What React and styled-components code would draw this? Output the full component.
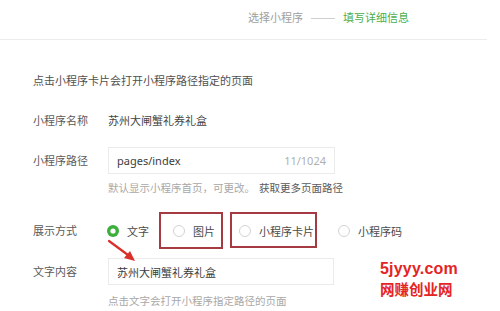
import React from 'react';
import styled, { createGlobalStyle } from 'styled-components';

const GlobalStyle = createGlobalStyle`
  html, body {
    margin: 0;
    padding: 0;
    background: #fff;
  }
  body {
    font-family: "Noto Sans", "Noto Sans CJK SC", sans-serif;
    color: #333;
  }
`;

const Page = styled.div`
  position: relative;
  width: 500px;
  height: 311px;
  overflow: hidden;
  background: #fff;
`;

const Header = styled.div`
  width: 487px;
  height: 40px;
  box-sizing: border-box;
  padding: 10px 0 0 248px;
  border-bottom: 1px solid #ececec;
  display: flex;
  align-items: flex-start;
  font-size: 11px;
  line-height: 16px;
`;

const Step = styled.span`
  color: ${p => (p.$active ? '#4cae4c' : '#a0a0a0')};
`;

const StepLine = styled.span`
  width: 24px;
  height: 1px;
  margin: 8px 8px 0;
  background: #cfcfcf;
`;

const Form = styled.div`
  padding-left: 33px;
  display: flex;
  flex-direction: column;
  font-size: 11px;
`;

const Intro = styled.div`
  margin-top: 31px;
  line-height: 20px;
  color: #505050;
`;

const Row = styled.div`
  margin-top: ${p => p.$mt}px;
  display: flex;
  align-items: center;
  min-height: 20px;
`;

const Label = styled.div`
  width: 75px;
  flex-shrink: 0;
  color: #5a5a5a;
  line-height: 20px;
`;

const Value = styled.div`
  color: #444;
  line-height: 20px;
`;

const Input = styled.div`
  width: ${p => p.$w}px;
  height: 27px;
  box-sizing: border-box;
  padding: 0 8px;
  border: 1px solid #ebebeb;
  display: flex;
  align-items: center;
  justify-content: space-between;
  color: #3c3c3c;
  font-size: 11px;
`;

const Counter = styled.span`
  color: #b0b0b0;
  font-size: 11px;
`;

const Hint = styled.div`
  margin: ${p => p.$mt}px 0 0 75px;
  line-height: 16px;
  font-size: 10.5px;
  color: #a8a8a8;
`;

const HintLink = styled.span`
  margin-left: 4px;
  color: #5a5a5a;
`;

const RadioGroup = styled.div`
  display: flex;
  gap: 24px;
  height: 37px;
  margin-left: -1px;
`;

const Option = styled.div`
  position: relative;
  display: flex;
  align-items: center;
  gap: 8px;
  color: #4a4a4a;

  ${p =>
    p.$box &&
    `
    &::after {
      content: '';
      position: absolute;
      top: 0;
      bottom: ${p.$box.bottom}px;
      left: ${-p.$box.left}px;
      right: ${-p.$box.right}px;
      border: 2px solid #a53a42;
    }
  `}
`;

const RadioDot = ({ checked }) => (
  <svg width="12" height="12" viewBox="0 0 12 12">
    {checked ? (
      <>
        <circle cx="6" cy="6" r="6" fill="#3daf3d" />
        <circle cx="6" cy="6" r="2.6" fill="#fff" />
      </>
    ) : (
      <circle cx="6" cy="6" r="5.5" fill="#fff" stroke="#d2d2d2" strokeWidth="1" />
    )}
  </svg>
);

const Arrow = styled.svg`
  position: absolute;
  left: 104px;
  top: 237px;
`;

const Watermark = styled.div`
  position: absolute;
  left: 380px;
  top: 258px;
  color: #e42424;
  font-weight: 700;
  line-height: 22px;
`;

const MarkLatin = styled.div`
  font-family: "Liberation Sans", "Noto Sans", sans-serif;
  font-size: 16px;
  letter-spacing: 0.2px;
`;

const MarkCjk = styled.div`
  font-family: "Noto Sans CJK SC", sans-serif;
  font-size: 14.5px;
  margin-top: -2px;
`;

const options = [
  { text: '文字', checked: true },
  { text: '图片', box: { left: 14, right: 8, bottom: 0 } },
  { text: '小程序卡片', box: { left: 9, right: 3, bottom: 1 } },
  { text: '小程序码' },
];

export default function App() {
  return (
    <Page>
      <GlobalStyle />
      <Header>
        <Step>选择小程序</Step>
        <StepLine />
        <Step $active>填写详细信息</Step>
      </Header>

      <Form>
        <Intro>点击小程序卡片会打开小程序路径指定的页面</Intro>

        <Row $mt={20}>
          <Label>小程序名称</Label>
          <Value>苏州大闸蟹礼券礼盒</Value>
        </Row>

        <Row $mt={16}>
          <Label>小程序路径</Label>
          <Input $w={227}>
            <span>pages/index</span>
            <Counter>11/1024</Counter>
          </Input>
        </Row>

        <Hint $mt={6}>
          默认显示小程序首页，可更改。<HintLink>获取更多页面路径</HintLink>
        </Hint>

        <Row $mt={16}>
          <Label>展示方式</Label>
          <RadioGroup>
            {options.map(o => (
              <Option key={o.text} $box={o.box}>
                <RadioDot checked={o.checked} />
                <span>{o.text}</span>
              </Option>
            ))}
          </RadioGroup>
        </Row>

        <Row $mt={9}>
          <Label>文字内容</Label>
          <Input $w={226}>
            <span>苏州大闸蟹礼券礼盒</span>
          </Input>
        </Row>

        <Hint $mt={8}>点击文字会打开小程序指定路径的页面</Hint>
      </Form>

      {/* annotation arrow */}
      <Arrow width="36" height="30" viewBox="0 0 36 30">
        <line x1="5" y1="4" x2="24" y2="18" stroke="#d9302c" strokeWidth="2.2" strokeLinecap="round" />
        <polygon points="31,24 20,21 26,14" fill="#d9302c" />
      </Arrow>

      <Watermark>
        <MarkLatin>5jyyy.com</MarkLatin>
        <MarkCjk>网赚创业网</MarkCjk>
      </Watermark>
    </Page>
  );
}
